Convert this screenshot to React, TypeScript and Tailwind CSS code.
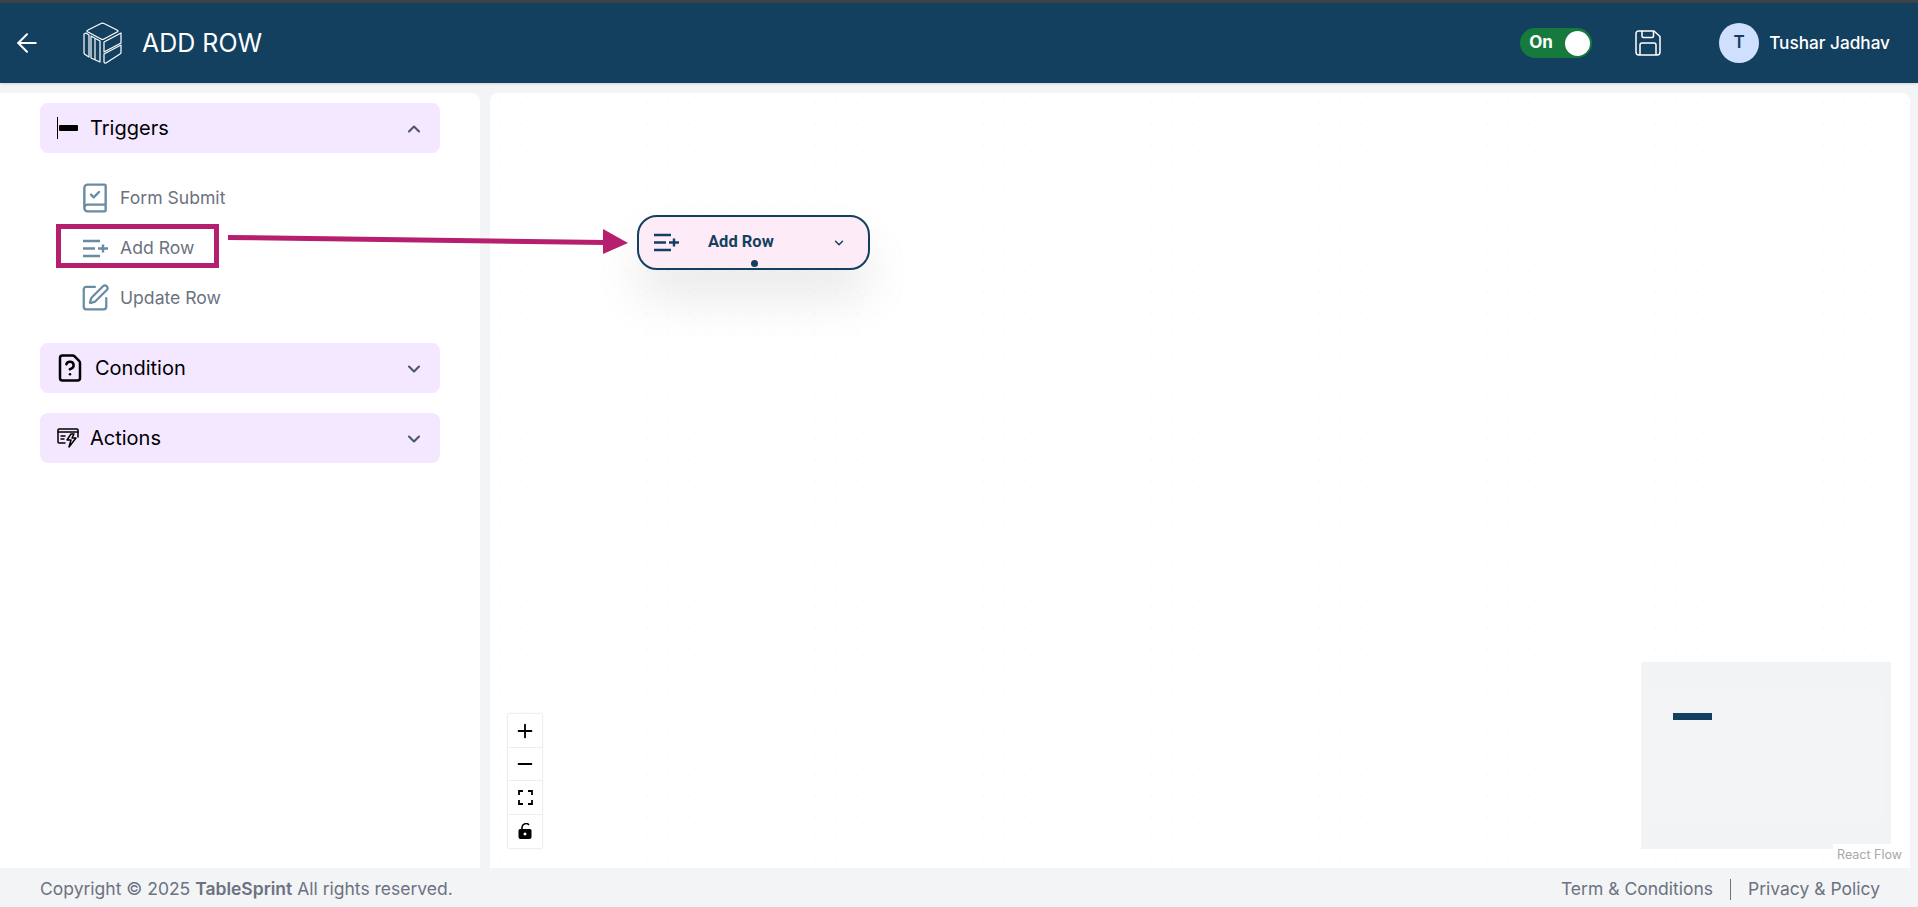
import React from "react";
import { ArrowLeft, ChevronDown, ChevronUp, SquarePen, BookCheck, FileQuestion, Plus, Minus } from "lucide-react";

function CubeLogo() {
  return (
    <svg width="42" height="44" viewBox="0 0 42 44" fill="none" stroke="white" strokeWidth="1.2" strokeLinejoin="round">
      <path d="M19 2.5 a3 3 0 0 1 3 0 L35 9 a1 1 0 0 1 0 2 L22 18 a3 3 0 0 1 -3 0 L6 11 a1 1 0 0 1 0 -2 Z" />
      <path d="M2 13 L4 12 L7 14 L7 36 L3 33.5 a2 2 0 0 1 -1 -2 Z" />
      <path d="M9 15 L18 20 L18 41 L9 37 Z" />
      <path d="M13 17.5 L13 39" />
      <path d="M22 21 L39 12 L39 22 L22 31 Z" />
      <path d="M22 33 L39 24 L39 31 a2 2 0 0 1 -1 2 L24 42 a1.5 1.5 0 0 1 -2 -1 Z" />
    </svg>
  );
}

function SaveIcon() {
  return (
    <svg width="26" height="26" viewBox="0 0 26 26" fill="none" stroke="white" strokeWidth="1.5" strokeLinejoin="round" className="ml-[43px]">
      <path d="M3.5 1 H19 L25 6.5 V22 a3 3 0 0 1 -3 3 H4 a3 3 0 0 1 -3 -3 V3.5 A2.5 2.5 0 0 1 3.5 1 Z" />
      <path d="M7 1 V6 a1.5 1.5 0 0 0 1.5 1.5 H17 a1.5 1.5 0 0 0 1.5 -1.5 V1" />
      <path d="M5 25 V15 a2 2 0 0 1 2 -2 H19 a2 2 0 0 1 2 2 V25" />
    </svg>
  );
}

function AddRowIcon({ className }: { className: string }) {
  return (
    <svg width="26" height="19" viewBox="0 0 26 19" fill="none" stroke="currentColor" strokeWidth="2.4" className={className}>
      <path d="M1 2 H18 M1 9.5 H13 M1 17 H18 M21 5.5 V13.5 M16 9.5 H26" />
    </svg>
  );
}

function ActionsIcon() {
  return (
    <svg width="22" height="22" viewBox="0 0 22 22" fill="none" stroke="black" strokeWidth="1.5" strokeLinejoin="round" strokeLinecap="round">
      <path d="M8 16 H2 a1 1 0 0 1 -1 -1 V3 a1 1 0 0 1 1 -1 H20 a1 1 0 0 1 1 1 V10" />
      <path d="M1 5 H21" />
      <path d="M4 9 H8 M4 12 H7" />
      <path d="M14 7 L10 13 H14 L12 20 L19 11 H15 L17 7 Z" />
    </svg>
  );
}

function AccordionHeader({ icon, label, open, gap }: { icon: React.ReactNode; label: string; open?: boolean; gap: string }) {
  return (
    <div className="flex h-[50px] items-center justify-between rounded-lg bg-[#f3e8ff] pl-4 pr-4">
      <div className={`flex items-center ${gap}`}>
        {icon}
        <span className="text-[20px] text-black">{label}</span>
      </div>
      {open ? <ChevronUp size={20} strokeWidth={2.5} className="mt-[2px] text-[#4b5563]" /> : <ChevronDown size={20} strokeWidth={2.5} className="mt-[2px] text-[#4b5563]" />}
    </div>
  );
}

function Item({ icon, label }: { icon: React.ReactNode; label: string }) {
  return (
    <div className="flex h-[50px] items-center">
      <div className="flex w-[40px] justify-center">{icon}</div>
      <span className="ml-[5px] text-[17.6px] text-[#6b7280]">{label}</span>
    </div>
  );
}

export default function App() {
  return (
    <div className="flex h-[907px] w-[1918px] flex-col overflow-hidden bg-[#f3f4f6] font-['Inter',sans-serif]">
      <div className="h-[3px] bg-[#3d4347]" />
      <header className="flex h-[80px] items-center justify-between bg-[#14405f] text-white shadow-sm">
        <div className="flex items-center">
          <ArrowLeft size={30} strokeWidth={1.6} className="ml-[12px]" />
          <div className="ml-[40px]"><CubeLogo /></div>
          <span className="ml-[18px] mt-[2px] text-[25px]">ADD ROW</span>
        </div>
        <div className="flex items-center">
          <div className="flex h-[30px] w-[72px] items-center justify-between rounded-full bg-[#157a3c] pl-[9px] pr-[2px]">
            <span className="text-[17px] font-bold">On</span>
            <span className="h-[25px] w-[25px] rounded-full bg-white" />
          </div>
          <SaveIcon />
          <div className="ml-[58px] flex h-10 w-10 items-center justify-center rounded-full bg-[#cfe0ff] text-[17px] font-semibold text-[#14405f]">T</div>
          <span className="ml-[10px] mr-[28px] text-[17.2px] font-medium">Tushar Jadhav</span>
        </div>
      </header>

      <main className="flex flex-1 gap-[10px] pt-[10px] pr-[8px]">
        <aside className="w-[480px] rounded-tr-lg bg-white pl-[40px] pr-[40px] pt-[10px]">
          <AccordionHeader open label="Triggers" gap="gap-[10px]" icon={
            <svg width="24" height="24" viewBox="0 0 24 24"><path d="M1.5 1 V23" stroke="black" strokeWidth="1" /><rect x="3" y="9" width="19" height="6" rx="1" fill="black" /></svg>
          } />
          <div className="pl-[35px] pt-[20px] pb-[20px]">
            <Item label="Form Submit" icon={<BookCheck size={32} strokeWidth={1.8} className="text-[#6a8ca3]" />} />
            <Item label="Add Row" icon={<AddRowIcon className="text-[#6a8ca3]" />} />
            <Item label="Update Row" icon={<SquarePen size={30} strokeWidth={1.8} className="text-[#6a8ca3]" />} />
          </div>
          <AccordionHeader label="Condition" gap="gap-[10px]" icon={<FileQuestion size={30} strokeWidth={2} className="-ml-[1px] text-black" />} />
          <div className="mt-[20px]">
            <AccordionHeader label="Actions" gap="gap-[11px]" icon={<div className="ml-[1px]"><ActionsIcon /></div>} />
          </div>
        </aside>

        <section className="relative flex-1 rounded-t-lg bg-white bg-[radial-gradient(#f9f9f9_1px,transparent_1px)] bg-[size:21px_21px]">
          <div className="absolute left-[147px] top-[122px] flex h-[55px] w-[233px] items-center rounded-[20px] border-2 border-[#14405f] bg-[#fdebf8] shadow-[0_28px_50px_rgba(0,0,0,0.09)]">
            <AddRowIcon className="ml-[14px] text-[#14405f]" />
            <span className="ml-[29px] font-['Roboto',sans-serif] text-[16.5px] font-bold text-[#14405f]">Add Row</span>
            <ChevronDown size={14} strokeWidth={2.5} className="ml-[58px] text-[#14405f]" />
            <span className="absolute bottom-[1px] left-[112px] h-[7px] w-[7px] rounded-full bg-[#14405f]" />
          </div>

          <div className="absolute left-[18px] top-[621px] flex w-[34px] flex-col bg-white shadow-[0_0_2px_rgba(0,0,0,0.2)]">
            <div className="flex h-[34px] items-center justify-center border-b border-[#eeeeee]"><Plus size={22} strokeWidth={2} className="text-black" /></div>
            <div className="flex h-[33px] items-center justify-center border-b border-[#eeeeee]"><Minus size={22} strokeWidth={2} className="text-black" /></div>
            <div className="flex h-[34px] items-center justify-center border-b border-[#eeeeee]">
              <svg width="15" height="15" viewBox="0 0 15 15" fill="none" stroke="black" strokeWidth="1.8"><path d="M1 5 V1 H5 M10 1 H14 V5 M14 10 V14 H10 M5 14 H1 V10" /></svg>
            </div>
            <div className="flex h-[33px] items-center justify-center">
              <svg width="14" height="17" viewBox="0 0 14 17"><path d="M4 7 V4 a4 4 0 0 1 7 -2" fill="none" stroke="black" strokeWidth="1.6" /><path d="M2 6 H12 a1.5 1.5 0 0 1 1.5 1.5 V14 a2 2 0 0 1 -2 2 H2.5 a2 2 0 0 1 -2 -2 V7.5 A1.5 1.5 0 0 1 2 6 Z M7 9.5 a1.5 1.5 0 1 0 0.01 0 Z" fill="black" fillRule="evenodd" /></svg>
            </div>
          </div>

          <div className="absolute right-[19px] top-[569px] h-[187px] w-[250px] bg-[#f1f3f4]">
            <div className="absolute left-[8px] top-[29px] h-[128px] w-[234px] bg-[#f3f4f6]" />
            <div className="absolute left-[32px] top-[51px] h-[7px] w-[39px] bg-[#14405f]" />
          </div>

          <div className="absolute bottom-[3px] right-[4px] bg-white px-[4px] text-[12.5px] leading-[21px] text-[#a8a8a8]">React Flow</div>
        </section>
      </main>

      <footer className="flex h-[39px] items-center justify-between bg-[#f3f4f6] pl-[40px] pr-[38px] pt-[4px] text-[17.5px] text-[#6b7280]">
        <span>Copyright © 2025 <b className="font-semibold">TableSprint</b> All rights reserved.</span>
        <div className="flex items-center">
          <span>Term &amp; Conditions</span>
          <span className="mx-[17px] h-[21px] w-[1px] bg-[#6b7280]" />
          <span>Privacy &amp; Policy</span>
        </div>
      </footer>

      <div className="absolute left-[56px] top-[224px] h-[44px] w-[163px] border-[5px] border-[#b61f6e]" />
      <svg className="absolute left-[225px] top-[225px]" width="405" height="34" viewBox="0 0 405 34">
        <path d="M3 12.5 L380 17.5" stroke="#b61f6e" strokeWidth="5" fill="none" />
        <path d="M378 4 L403 18 L378 29 Z" fill="#b61f6e" />
      </svg>
    </div>
  );
}
